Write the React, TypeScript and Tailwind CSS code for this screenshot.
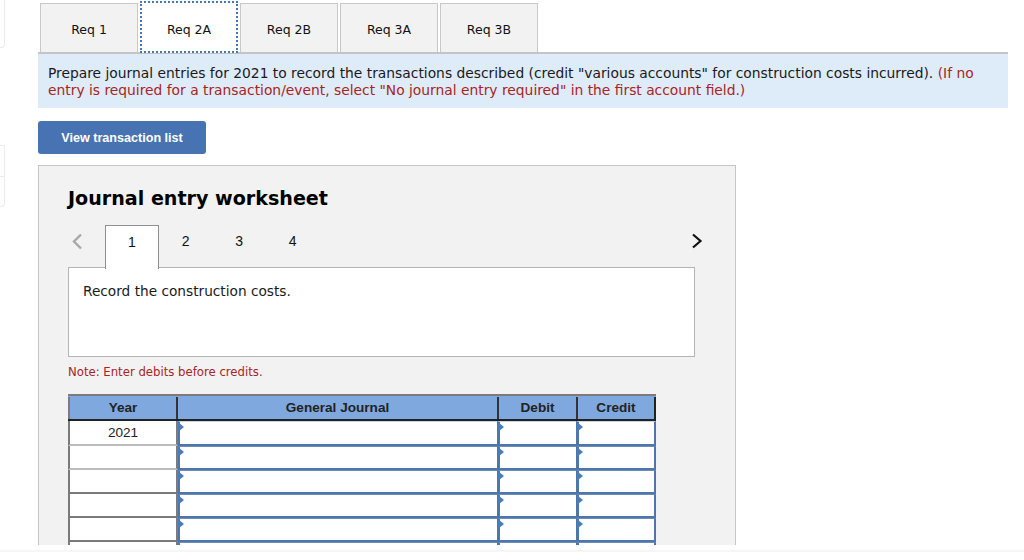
import React from 'react';

const reqTabs = ['Req 1', 'Req 2A', 'Req 2B', 'Req 3A', 'Req 3B'];
const rows = ['2021', '', '', '', '', ''];

const InputCell = ({ width, first, last }: { width: string; first: boolean; last?: boolean }) => {
  return (
    <div className={`relative h-full shrink-0 bg-white border-b-2 border-t border-[#4f76ab] ${width} ${first ? 'border-t-[#c3d6ee]' : 'border-t-[#6b8cbd]'} ${last ? 'border-r-2' : ''}`}>
      <svg className="absolute -left-[2px] top-0" width="7" height="10" viewBox="0 0 7 10">
        <polygon points="0,0 6,5 0,10" fill="#4a7ebb" />
      </svg>
    </div>
  );
};

const App: React.FC = () => {
  return (
    <div className="w-[1024px] h-[560px] overflow-hidden bg-white text-black font-['DejaVu_Sans',sans-serif]">
      <div className="flex h-[545px] overflow-hidden">
        <div className="w-[38px] shrink-0">
          <div className="w-[5px] h-[48px] border-r border-b border-[#ececec] rounded-br-[4px]"></div>
          <div className="w-[5px] h-[32px] mt-[97px] border-r border-t border-b border-[#ececec]"></div>
          <div className="w-[5px] h-[30px] border-r border-b border-[#ececec] rounded-br-[4px]"></div>
        </div>

        <div className="w-[970px] shrink-0">
          <div className="flex gap-[2px] pl-[2px] pt-[3px] h-[54px] border-b-2 border-[#c4c4c4]">
            {reqTabs.map((tab, i) => (
              <div
                key={tab}
                className={
                  i === 1
                    ? 'w-[98px] h-[52px] -mt-[2px] pt-[7px] flex items-center justify-center text-[12.5px] text-[#111] bg-white border-[2px] border-dotted border-[#4a76b0]'
                    : 'w-[98px] h-[49px] pt-[4px] flex items-center justify-center text-[12.5px] text-[#111] bg-[#f2f2f2] border border-b-0 border-[#c8c8c8]'
                }
              >
                {tab}
              </div>
            ))}
          </div>

          <div className="h-[54px] bg-[#deebf8] pl-[10px] pr-[25px] pt-[11px] text-[13.83px] leading-[17px] text-[#1a1a1a]">
            Prepare journal entries for 2021 to record the transactions described (credit "various accounts" for construction costs incurred).{' '}
            <span className="text-[#a82424]">(If no entry is required for a transaction/event, select "No journal entry required" in the first account field.)</span>
          </div>

          <button className="block mt-[13px] pt-[2px] w-[168px] h-[33px] rounded-[3px] bg-[#4773b3] text-white text-[12.6px] font-bold text-center font-['Liberation_Sans',sans-serif]">
            View transaction list
          </button>

          <div className="mt-[11px] w-[698px] h-[400px] bg-[#f2f2f2] border border-b-0 border-[#c6c6c6] pl-[29px]">
            <h2 className="mt-[20px] h-[26px] text-[19.1px] leading-[26px] font-bold text-black">Journal entry worksheet</h2>

            <div className="flex items-start h-[43px] mt-[13px] w-[627px]">
              <svg className="ml-[3px] mt-[8px]" width="12" height="17" viewBox="0 0 12 17" fill="none">
                <path d="M10 1.5 3 8.5l7 7" stroke="#a8a8a8" strokeWidth="2.4" />
              </svg>
              <div className="ml-[22px] w-[54px] h-[44px] pb-[10px] bg-white border border-b-0 border-[#8f8f8f] z-10 flex items-center justify-center font-['Liberation_Sans',sans-serif] text-[14px] text-[#111]">1</div>
              {['2', '3', '4'].map((n) => (
                <div key={n} className="w-[53.5px] h-[43px] pb-[10px] flex items-center justify-center font-['Liberation_Sans',sans-serif] text-[14px] text-[#111]">{n}</div>
              ))}
              <svg className="ml-auto -mr-[8px] mt-[8px]" width="12" height="16" viewBox="0 0 12 16" fill="none">
                <path d="M2 1.5 9.5 8 2 14.5" stroke="#111" strokeWidth="2.2" />
              </svg>
            </div>

            <div className="w-[627px] h-[90px] -mt-[1px] bg-white border border-[#b4b4b4] pl-[14px] pt-[15px] text-[13.7px] leading-[17px] text-[#1a1a1a]">
              Record the construction costs.
            </div>

            <p className="mt-[7px] h-[16px] text-[11.7px] leading-[16px] text-[#a82424]">Note: Enter debits before credits.</p>

            <div className="mt-[14px] w-[588px] font-['Liberation_Sans',sans-serif] text-[13.6px] text-[#222]">
              <div className="flex h-[27px] pt-[1px] bg-[#7fa9de] border-t-2 border-[#7b7b7b] border-b-2 border-b-[#222] font-bold">
                <div className="w-[110px] pt-[1px] border-l-2 border-r-2 border-l-[#7b7b7b] border-r-[#333] flex items-center justify-center">Year</div>
                <div className="w-[321px] pt-[1px] border-r-2 border-[#333] flex items-center justify-center">General Journal</div>
                <div className="w-[79px] pt-[1px] border-r-2 border-[#333] flex items-center justify-center">Debit</div>
                <div className="w-[78px] pt-[1px] border-r-2 border-[#222] flex items-center justify-center">Credit</div>
              </div>
              {rows.map((year, i) => (
                <div key={i} className={`flex ${i === 0 ? 'h-[25px]' : 'h-[24px]'}`}>
                  <div className={`w-[110px] shrink-0 pt-[2px] bg-white border-l-2 border-r-2 border-b-2 border-[#7b7b7b] flex items-center justify-center ${i < 2 ? 'border-b-[#bcbcbc]' : ''}`}>
                    {year}
                  </div>
                  <InputCell width="w-[319px] border-l-2" first={i === 0} />
                  <InputCell width="w-[79px] border-l-[3px]" first={i === 0} />
                  <InputCell width="w-[80px] border-l-[3px]" first={i === 0} last />
                </div>
              ))}
            </div>
          </div>
        </div>
      </div>
      <div className="mt-[5px] h-[2px] bg-[#f6f6f6]"></div>
    </div>
  );
};

export default App;
